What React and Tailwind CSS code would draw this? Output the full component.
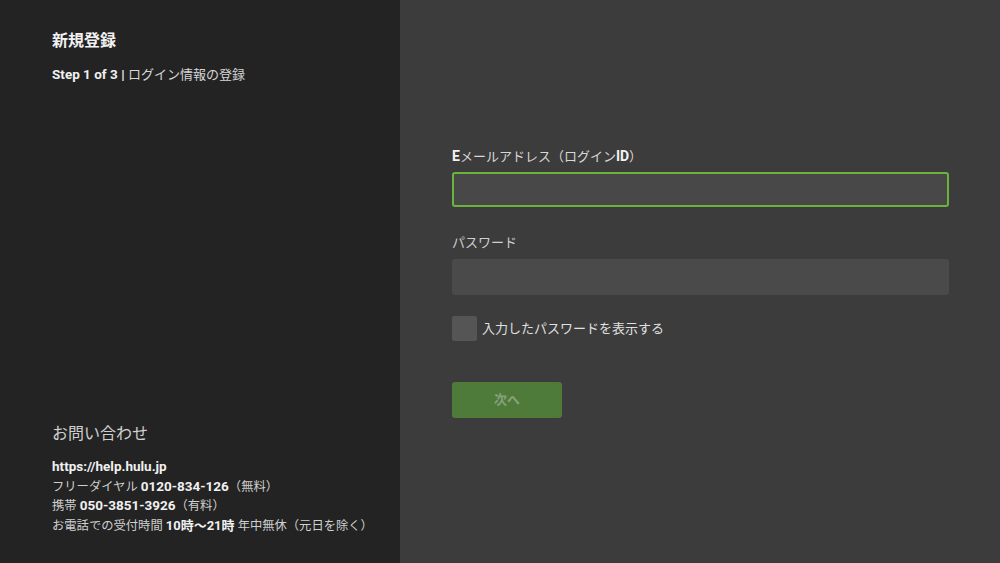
import React from "react";

export default function App() {
  const b = "font-bold text-[#f0f0f0] text-[13.5px] leading-[19.5px]";
  return (
    <div
      className="flex w-[1000px] h-[563px] overflow-hidden"
      style={{ fontFamily: 'Roboto, "Noto Sans CJK JP", sans-serif' }}
    >
      <div className="w-[400px] h-full bg-[#232323] flex flex-col justify-between pl-[52px] pt-[31px] pb-[28px]">
        <div>
          <div className="text-[16px] font-bold text-[#f2f2f2] leading-[20px]">新規登録</div>
          <div className="mt-[14px] h-[18px] text-[13px] leading-[18px] text-[#d6d6d6]">
            <span className="font-bold text-[#f0f0f0] text-[13.5px] leading-[18px]">Step 1 of 3 | </span>ログイン情報の登録
          </div>
        </div>
        <div>
          <div className="text-[16px] leading-[22px] text-[#d0d0d0]">お問い合わせ</div>
          <div className="mt-[12px] text-[12.3px] leading-[19.5px] text-[#cfcfcf]">
            <div className={"h-[19.5px] " + b}>https://help.hulu.jp</div>
            <div className="h-[19.5px]">
              フリーダイヤル <span className={b}>0120-834-126</span>（無料）
            </div>
            <div className="h-[19.5px]">
              携帯 <span className={b}>050-3851-3926</span>（有料）
            </div>
            <div className="h-[19.5px]">
              お電話での受付時間 <span className="font-bold text-[#f0f0f0] text-[13px] leading-[19.5px]">10時～21時</span> 年中無休（元日を除く）
            </div>
          </div>
        </div>
      </div>
      <div className="flex-1 h-full bg-[#3c3c3c] pl-[52px] pr-[51px] pt-[146px]">
        <div className="h-[20px] text-[13px] leading-[20px] text-[#d8d8d8]">
          <span className="font-bold text-[#f2f2f2] text-[14px] leading-[20px]">E</span>メールアドレス（ログイン<span className="font-bold text-[#f2f2f2] text-[14px] leading-[20px]">ID</span>）
        </div>
        <div className="mt-[6px] h-[35px] rounded-[3px] border-2 border-[#6cb33e] bg-[#484848]" />
        <div className="mt-[26px] h-[20px] text-[13px] leading-[20px] text-[#d0d0d0]">パスワード</div>
        <div className="mt-[6px] h-[36px] rounded-[3px] bg-[#4a4a4a]" />
        <div className="mt-[21px] flex items-center gap-[5px]">
          <div className="w-[25px] h-[25px] rounded-[2px] bg-[#555555]" />
          <div className="text-[13px] leading-[20px] text-[#e0e0e0]">入力したパスワードを表示する</div>
        </div>
        <div className="mt-[41px] w-[110px] h-[36px] rounded-[3px] bg-[#4e7a3a] flex items-center justify-center text-[13px] font-bold text-[#88a27c]">
          次へ
        </div>
      </div>
    </div>
  );
}
